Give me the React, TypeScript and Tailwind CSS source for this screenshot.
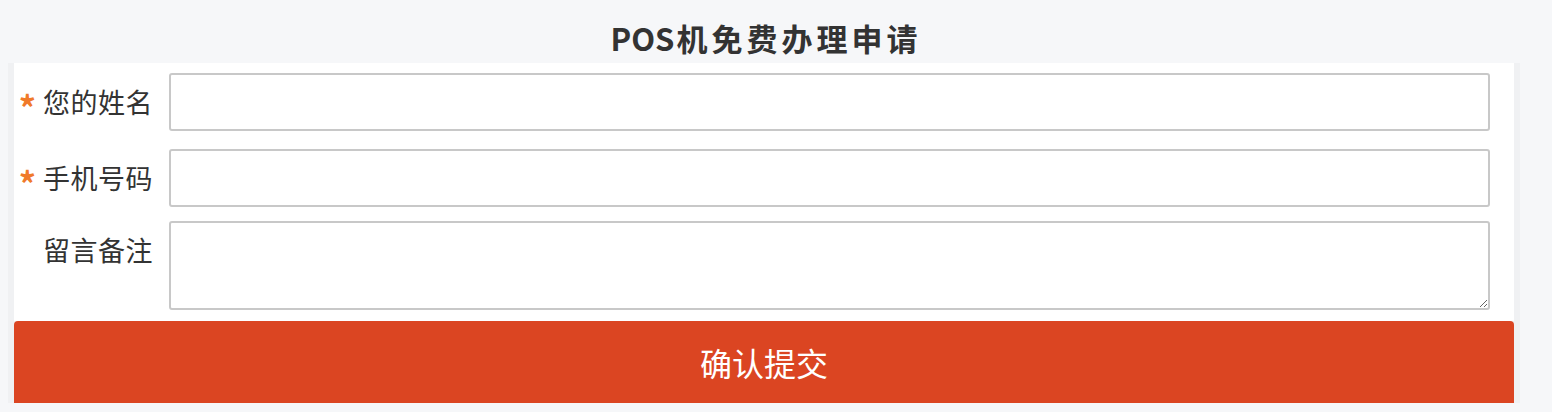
import React from "react";

const font = { fontFamily: '"Noto Sans CJK SC", "Noto Sans", sans-serif' };

function Label({ text, required }: { text: string; required?: boolean }) {
  return (
    <div className="w-[155px] shrink-0 flex items-center justify-end pr-[16px] text-[27px] text-[#333] leading-[58px]">
      {required ? (
        <span className="text-[#f07a2a] font-bold mr-[7px] text-[34px] leading-none relative top-[5px]">*</span>
      ) : null}
      <span className="tracking-[0.5px]">{text}</span>
    </div>
  );
}

export default function App() {
  return (
    <div className="min-h-[412px] bg-[#f6f7f9]" style={font}>
      <div className="ml-[8px] w-[1512px]">
        <h1 className="h-[63px] flex items-center justify-center pt-[14px] text-[31px] font-bold text-[#333]">
          <span className="tracking-[0px] mr-[2px]">POS</span>
          <span className="tracking-[4px] mr-[-4px]">机免费办理申请</span>
        </h1>
        <div className="bg-[#f0f1f3] px-[6px]">
          <div className="bg-white pt-[10px] pb-[11px] pr-[24px]">
            <div className="flex">
              <Label text="您的姓名" required />
              <input className="flex-1 h-[58px] border-2 border-[#c8c8c8] rounded-[3px] outline-none px-2" />
            </div>
            <div className="flex mt-[18px]">
              <Label text="手机号码" required />
              <input className="flex-1 h-[58px] border-2 border-[#c8c8c8] rounded-[3px] outline-none px-2" />
            </div>
            <div className="flex mt-[14px]">
              <div className="w-[155px] shrink-0 flex items-start justify-end pr-[16px] text-[27px] text-[#333] leading-[58px]">
                <span className="tracking-[0.5px]">留言备注</span>
              </div>
              <textarea className="flex-1 h-[89px] border-2 border-[#c8c8c8] rounded-[3px] outline-none px-2 block" />
            </div>
          </div>
          <button className="w-full h-[82px] bg-[#db4522] text-white text-[32px] rounded-t-[4px] flex items-center justify-center">
            确认提交
          </button>
        </div>
      </div>
    </div>
  );
}
